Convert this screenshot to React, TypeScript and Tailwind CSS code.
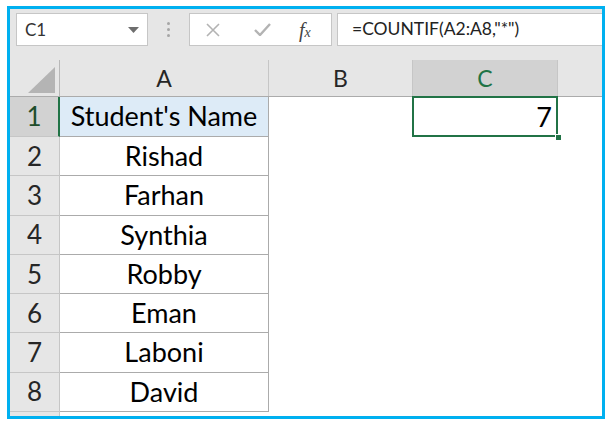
import React from 'react';

const names = ['Rishad', 'Farhan', 'Synthia', 'Robby', 'Eman', 'Laboni', 'David'];

const RowHead: React.FC<{ n: number; active?: boolean; h: string }> = ({ n, active, h }) => (
  <div
    className={`${h} w-[50px] shrink-0 flex items-center justify-center border-b border-r border-[#c6c6c6] text-[26px] ${
      active ? 'bg-[#d2d2d2] text-[#1e4d2b] border-r-2 border-r-[#217346]' : 'bg-[#e6e6e6] text-[#262626]'
    }`}
  >
    {n}
  </div>
);

export default function App() {
  return (
    <div className="w-[611px] h-[426px] bg-white pl-[7px] pt-[6px] font-['Lato',sans-serif]">
      <div className="w-[598px] h-[413px] border-[3px] border-[#00b0f0] overflow-hidden bg-white flex flex-col">
        {/* formula toolbar */}
        <div className="h-[51px] shrink-0 bg-[#e6e6e6] flex items-start pt-[4px] pl-[6px]">
          <div className="w-[132px] h-[33px] bg-white border border-[#c6c6c6] flex items-center justify-between pl-[8px] pr-[8px] text-[17px] text-[#333]">
            <span>C1</span>
            <svg width="11" height="6" viewBox="0 0 11 6">
              <path d="M0 0 L11 0 L5.5 6 Z" fill="#6e6e6e" />
            </svg>
          </div>
          <div className="w-[41px] h-[33px] flex flex-col items-center justify-center gap-[3px]">
            <span className="w-[3px] h-[3px] rounded-full bg-[#a6a6a6]" />
            <span className="w-[3px] h-[3px] rounded-full bg-[#a6a6a6]" />
            <span className="w-[3px] h-[3px] rounded-full bg-[#a6a6a6]" />
          </div>
          <div className="w-[143px] h-[33px] bg-white border border-[#c6c6c6] flex items-center pl-[16px]">
            <svg width="14" height="14" viewBox="0 0 14 14" className="mr-[34px]">
              <path d="M1 1 L13 13 M13 1 L1 13" stroke="#b3b3b3" strokeWidth="1.6" />
            </svg>
            <svg width="17" height="13" viewBox="0 0 17 13" className="mr-[28px]">
              <path d="M1 7 L6 12 L16 1" stroke="#b3b3b3" strokeWidth="2.4" fill="none" />
            </svg>
            <span className="font-['Liberation_Serif',serif] italic text-[20px] text-[#444] leading-none">
              f<span className="text-[14px]">x</span>
            </span>
          </div>
          <div className="ml-[5px] flex-1 h-[33px] bg-white border border-[#c6c6c6] border-r-0 flex items-center pl-[14px] text-[17.5px] text-[#222]">
            =COUNTIF(A2:A8,"*")
          </div>
        </div>

        {/* column headers */}
        <div className="h-[37px] shrink-0 flex bg-[#e6e6e6] border-b border-[#ababab]">
          <div className="w-[50px] shrink-0 border-r border-[#b8b8b8] flex items-end justify-end pr-[4px] pb-[3px]">
            <svg width="27" height="26" viewBox="0 0 27 26">
              <path d="M27 0 L27 26 L0 26 Z" fill="#b4b4b4" />
            </svg>
          </div>
          <div className="w-[209px] shrink-0 border-r border-[#c6c6c6] flex items-center justify-center text-[23px] text-[#262626]">
            A
          </div>
          <div className="w-[144px] shrink-0 border-r border-[#c6c6c6] flex items-center justify-center text-[23px] text-[#262626]">
            B
          </div>
          <div className="w-[145px] shrink-0 border-r border-[#c6c6c6] bg-[#d2d2d2] flex items-center justify-center text-[23px] text-[#217346]">
            C
          </div>
        </div>

        {/* row 1 */}
        <div className="flex shrink-0">
          <RowHead n={1} active h="h-[40px]" />
          <div className="w-[209px] h-[40px] shrink-0 bg-[#ddebf7] border-b border-r border-[#ababab] flex items-center justify-center text-[27px] text-black">
            Student's Name
          </div>
          <div className="w-[144px] h-[40px] shrink-0" />
          <div className="relative w-[145px] h-[40px] shrink-0 flex items-center justify-end pr-[6px] text-[27px] text-black">
            7
            <div className="absolute -left-[1px] -top-[1px] right-0 bottom-0 border-2 border-[#217346]" />
            <div className="absolute -right-[4px] -bottom-[4px] w-[7px] h-[7px] bg-[#217346] border border-white" />
          </div>
        </div>

        {names.map((name, i) => (
          <div key={name} className="flex shrink-0">
            <RowHead n={i + 2} h="h-[39.3px]" />
            <div className="w-[209px] h-[39.3px] shrink-0 border-b border-r border-[#ababab] flex items-center justify-center text-[27px] text-black">
              {name}
            </div>
          </div>
        ))}

        <div className="flex flex-1">
          <div className="w-[50px] shrink-0 bg-[#e6e6e6] border-r border-[#c6c6c6]" />
        </div>
      </div>
    </div>
  );
}
